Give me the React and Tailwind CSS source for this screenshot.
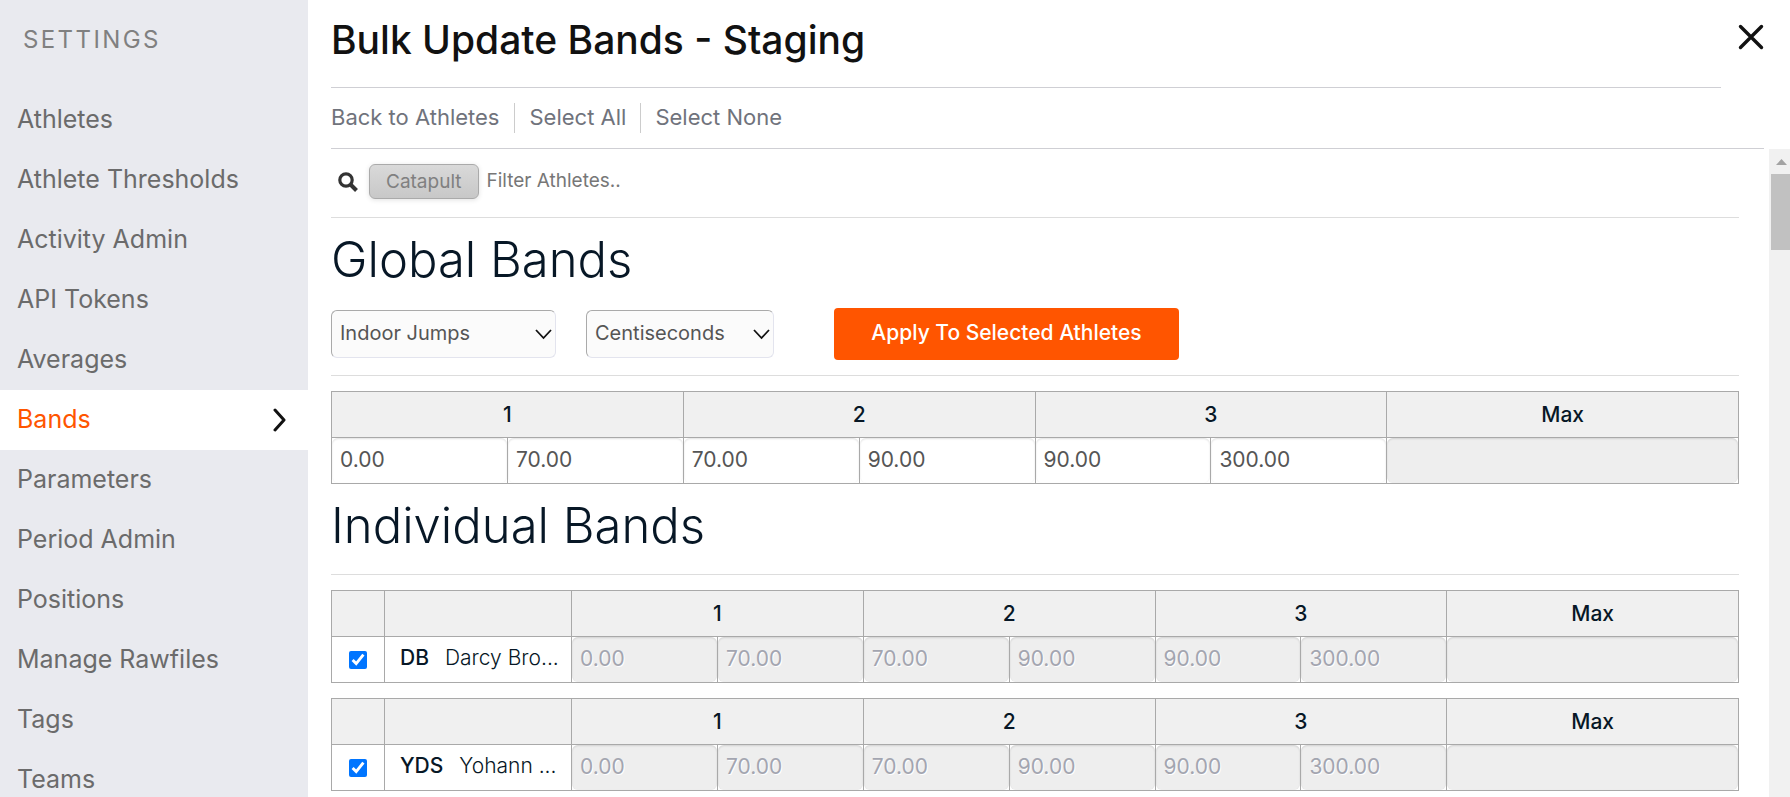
import React, { useState } from 'react';

const navItems = [
  'Athletes',
  'Athlete Thresholds',
  'Activity Admin',
  'API Tokens',
  'Averages',
  'Bands',
  'Parameters',
  'Period Admin',
  'Positions',
  'Manage Rawfiles',
  'Tags',
  'Teams'
];

const bands = [
  { name: '1', min: '0.00', max: '70.00' },
  { name: '2', min: '70.00', max: '90.00' },
  { name: '3', min: '90.00', max: '300.00' }
];

const athletes = [
  { initials: 'DB', name: 'Darcy Bro...' },
  { initials: 'YDS', name: 'Yohann ...' }
];

const Sidebar = () => (
  <aside className="w-[308px] shrink-0 bg-[#e9eaef]">
    <h2 className="h-[90px] pl-[23px] pt-6 text-2xl leading-8 font-normal tracking-widest text-[#808080]">SETTINGS</h2>
    <nav>
      {navItems.map((item) => (
        <a
          key={item}
          href="#"
          className={`flex h-[60px] items-center justify-between pl-[17px] pr-[22px] text-[25px] ${
            item === 'Bands' ? 'bg-white text-[#ff5500]' : 'text-[#6b6b6b]'
          }`}
        >
          {item}
          {item === 'Bands' && (
            <svg width="13" height="26" viewBox="0 0 13 26" fill="none" stroke="#111" strokeWidth="3" strokeLinecap="round" strokeLinejoin="round">
              <path d="M2 3l9 10-9 10" />
            </svg>
          )}
        </a>
      ))}
    </nav>
  </aside>
);

const Select = ({ label, value, className }) => (
  <div className={`relative ${className}`}>
    <select
      aria-label={label}
      defaultValue={value}
      className="block h-12 w-full appearance-none rounded-md border border-t-[#aaa] border-l-[#aaa] border-r-[#e3e4ee] border-b-[#e3e4ee] bg-[#fbfbfb] pl-2 pb-0.5 text-xl text-[#555]"
    >
      <option>{value}</option>
    </select>
    <svg className="pointer-events-none absolute right-1 top-[19px]" width="17" height="11" viewBox="0 0 17 11" fill="none" stroke="#111" strokeWidth="1.800">
      <path d="M1 1l7.500 8L16 1" />
    </svg>
  </div>
);

const BandInput = ({ value, label, disabled }) => (
  <input
    aria-label={label}
    defaultValue={value}
    disabled={disabled}
    className="block h-[45px] w-full rounded-md bg-white pl-2 pb-0.5 text-[21px] text-[#555] shadow-[inset_0_1px_2px_rgba(0,0,0,0.12)] disabled:bg-[#eee] disabled:text-[#a3a5b0] disabled:[text-shadow:1px_1px_0_#fff]"
  />
);

const BandTable = ({ athlete }) => {
  const [checked, setChecked] = useState(true);
  const cell = 'border border-[#a9a9a9] p-0';
  const head = `${cell} h-[46px] bg-[#f0f0f0] text-[21px] leading-7 font-medium text-[#071726]`;
  const owner = athlete ? athlete.initials : 'Global';

  return (
    <table className="w-full table-fixed border-collapse">
      <colgroup>
        {athlete && <col className="w-[53px]" />}
        {athlete && <col className="w-[187px]" />}
        {bands.map((band) => (
          <React.Fragment key={band.name}>
            <col />
            <col />
          </React.Fragment>
        ))}
        <col />
        <col />
      </colgroup>
      <thead>
        <tr>
          {athlete && <td className={head}></td>}
          {athlete && <td className={head}></td>}
          {bands.map((band) => (
            <th key={band.name} colSpan={2} className={head}>{band.name}</th>
          ))}
          <th colSpan={2} className={head}>Max</th>
        </tr>
      </thead>
      <tbody>
        <tr>
          {athlete && (
            <td className={cell}>
              <input
                type="checkbox"
                aria-label={`Select ${athlete.initials}`}
                checked={checked}
                onChange={() => setChecked(!checked)}
                className="mx-auto block size-[18px] accent-[#0075ff]"
              />
            </td>
          )}
          {athlete && (
            <td className={`${cell} whitespace-nowrap pl-[15px] pb-1 text-[21px] leading-7 text-[#071726]`}>
              <span className="mr-4 font-medium">{athlete.initials}</span>
              <span className="font-light">{athlete.name}</span>
            </td>
          )}
          {bands.map((band) => (
            <React.Fragment key={band.name}>
              <td className={cell}>
                <BandInput label={`${owner} band ${band.name} minimum`} value={band.min} disabled={!!athlete} />
              </td>
              <td className={cell}>
                <BandInput label={`${owner} band ${band.name} maximum`} value={band.max} disabled={!!athlete} />
              </td>
            </React.Fragment>
          ))}
          <td colSpan={2} className={cell}>
            <BandInput label={`${owner} max`} disabled />
          </td>
        </tr>
      </tbody>
    </table>
  );
};

const SectionTitle = ({ children }) => (
  <h2 className="mt-4 mb-[22px] text-[49px] leading-[52px] font-light text-[#071726]">{children}</h2>
);

const App = () => {
  return (
    <div className="flex h-screen overflow-hidden bg-white font-['Inter','Liberation_Sans',sans-serif]">
      <Sidebar />

      <main className="flex min-w-0 flex-1 flex-col pl-[23px]">
        {/* Header */}
        <header className="flex shrink-0">
          <h1 className="h-[88px] flex-1 border-b border-[#cfcfd4] pt-4 text-[39px] leading-[48px] font-medium text-[#111]">
            Bulk Update Bands - Staging
          </h1>
          <button type="button" aria-label="Close" className="mt-6 mr-[26px] ml-[17px] size-[26px]">
            <svg width="26" height="26" viewBox="0 0 26 26" stroke="#111" strokeWidth="3.400" strokeLinecap="round">
              <path d="M2.500 2.500l21 21M23.500 2.500l-21 21" />
            </svg>
          </button>
        </header>

        {/* Links */}
        <div className="mr-[26px] flex h-[61px] shrink-0 items-center border-b border-[#cfcfd4] text-[22px] leading-7 text-[#70737c]">
          <a href="#" className="pr-[15px] pb-0.5">Back to Athletes</a>
          <a href="#" className="border-l border-[#ccc] px-[14px] pb-0.5">Select All</a>
          <a href="#" className="border-l border-[#ccc] pl-[14px] pb-0.5">Select None</a>
        </div>

        <div className="flex min-h-0 flex-1">
          <div className="min-w-0 flex-1 overflow-hidden pr-[30px]">
            {/* Filter */}
            <div className="flex h-[69px] items-center border-b border-[#ddd] pl-[7px] pb-[3px]">
              <svg width="20" height="20" viewBox="0 0 20 20" fill="none" stroke="#333" strokeWidth="3.200">
                <circle cx="8" cy="8" r="6.200" />
                <path d="M12.500 12.500l6 6" strokeWidth="4" />
              </svg>
              <button type="button" className="ml-[11px] h-[35px] rounded-md border border-[#aaa] bg-linear-to-b from-[#d9d9d9] to-[#c8c8c8] px-4 text-[19px] leading-8 text-[#808080] shadow-[0_1px_5px_rgba(0,0,0,0.12)]">
                Catapult
              </button>
              <input aria-label="Filter athletes" placeholder="Filter Athletes.." className="ml-2 min-w-0 flex-1 text-[19px] placeholder:text-[#777]" />
            </div>

            {/* Global bands */}
            <SectionTitle>Global Bands</SectionTitle>
            <div className="mb-[15px] flex items-center border-b border-[#ddd] pb-[15px]">
              <Select label="Band type" value="Indoor Jumps" className="mr-[30px] w-[225px]" />
              <Select label="Units" value="Centiseconds" className="mr-[60px] w-[188px]" />
              <button type="button" className="h-[52px] w-[345px] rounded bg-[#ff5500] pb-0.5 text-[21px] font-medium text-white">
                Apply To Selected Athletes
              </button>
            </div>
            <BandTable />

            {/* Individual bands */}
            <SectionTitle>Individual Bands</SectionTitle>
            <div className="flex flex-col gap-[15px] border-t border-[#ddd] pt-[15px]">
              {athletes.map((athlete) => (
                <BandTable key={athlete.initials} athlete={athlete} />
              ))}
            </div>
          </div>

          {/* Scrollbar */}
          <div className="w-[21px] shrink-0 bg-[#f1f1f1] pl-[2px]">
            <svg className="h-[25px] w-[19px]" viewBox="0 0 19 25" fill="#a3a3a3">
              <path d="M5 16l5.500-6 5.500 6z" />
            </svg>
            <div className="h-[76px] bg-[#c1c1c1]"></div>
          </div>
        </div>
      </main>
    </div>
  );
};

export default App;
